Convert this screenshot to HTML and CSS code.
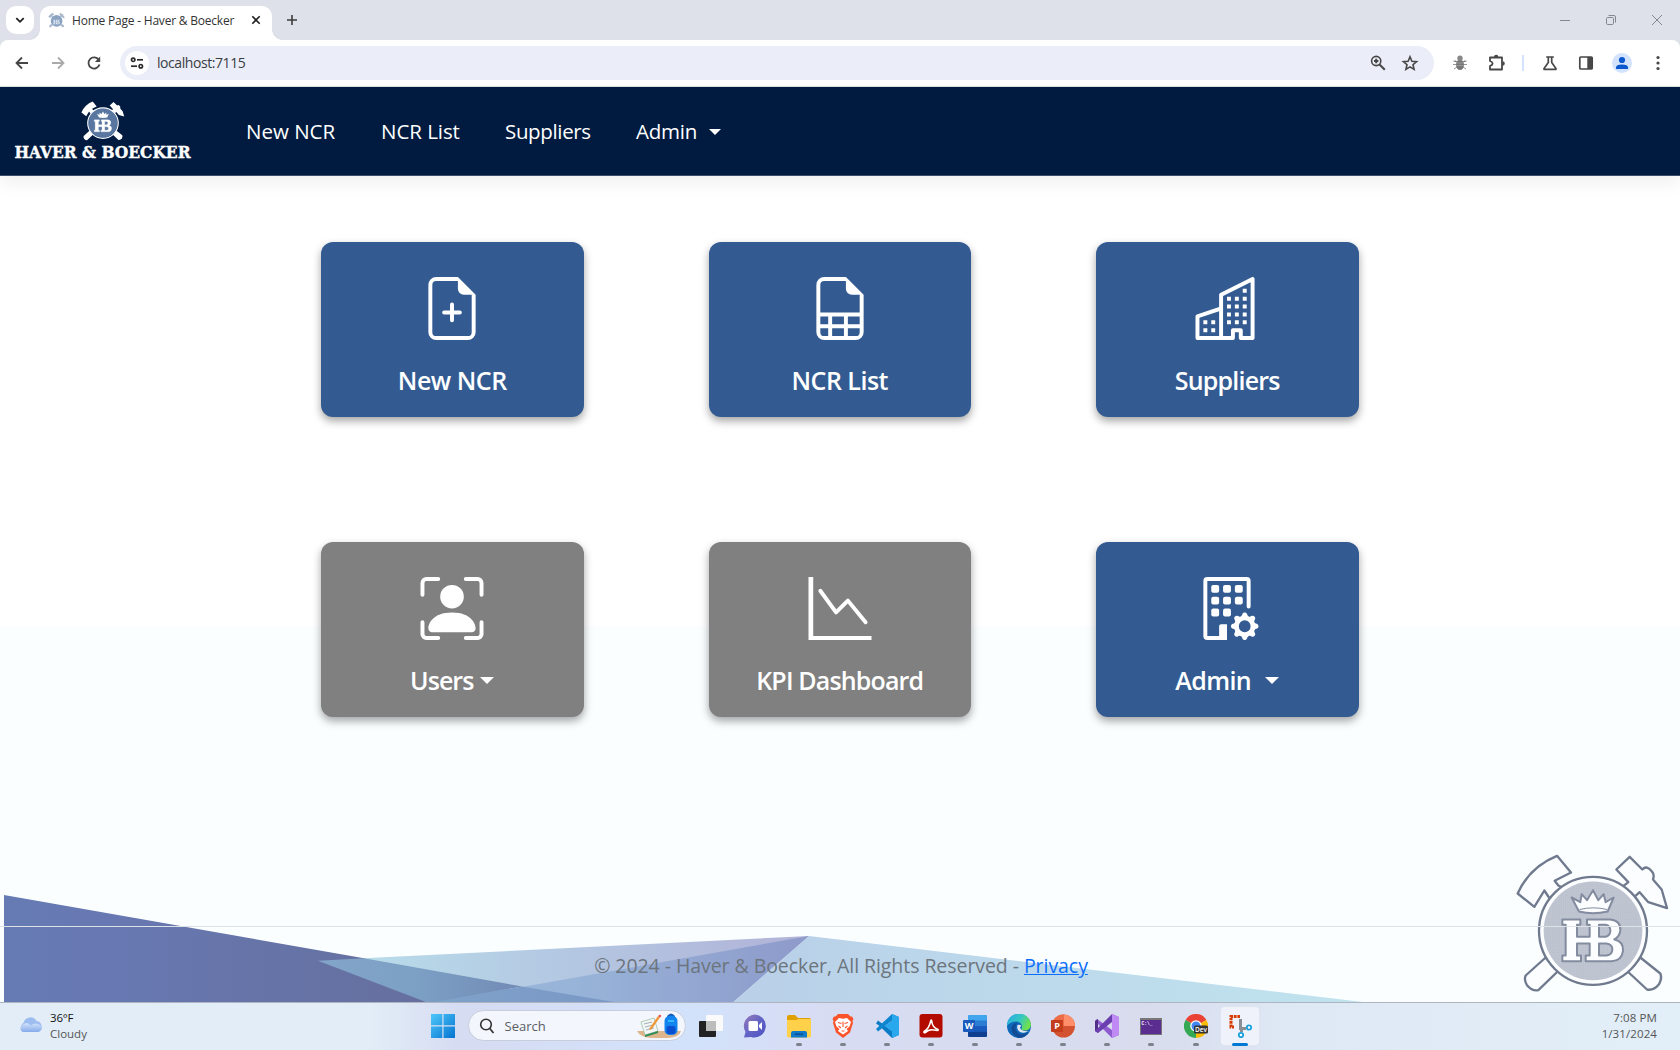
FILE: index.html
```html
<!DOCTYPE html>
<html lang="en">
<head>
<meta charset="utf-8">
<title>Home Page - Haver &amp; Boecker</title>
<link rel="stylesheet" href="styles.css">
</head>
<body>
<svg class="defs" width="0" height="0" aria-hidden="true">
  <defs>
    <pattern id="mesh" width="11" height="11" patternUnits="userSpaceOnUse"><path d="M0 3H11M3 0V11M0 8.500H11M8.500 0V11" stroke="#8089a0" stroke-width="1.600" opacity=".7"/></pattern>
    <pattern id="meshw" width="32" height="32" patternUnits="userSpaceOnUse"><path d="M0 8H32M8 0V32M0 24H32M24 0V32" stroke="#a9c0dd" stroke-width="7" opacity=".5"/></pattern>
    <g id="hammers">
      <path d="M232 77L274 127L225 152L236 166L248 172L210 205L194 181L164 230L114 190Q150 110 232 77Z"/>
      <path d="M450 80L488 118Q500 104 515 122Q526 132 520 148L546 178L562 234L506 216L480 186L464 200L428 170L446 156L410 118Z"/>
      <path d="M198 382L138 436Q132 450 142 465Q158 484 176 480L234 424Z"/>
      <path d="M482 382L542 430Q548 444 538 462Q522 482 502 478L444 424Z"/>
    </g>
    <path id="crown" d="M276 202L302 216L306 192L322 210L340 180L356 210L372 192L378 216L402 202L384 244Q340 254 298 244Z"/>
    <path id="hb" d="M248 268H302V284H292V320H330V284H322V268H392Q424 272 422 300Q420 320 404 328Q432 334 430 362Q426 392 396 393H318V376H330V340H292V376H304V393H248V376H258V284H248ZM358 284V320H378Q392 316 392 302Q392 286 378 284ZM358 340V376H380Q398 374 398 358Q398 342 380 340Z" fill-rule="evenodd"/>
  </defs>
</svg>

<header class="browser">
  <div class="tabstrip">
    <button class="tabsearch"><svg viewBox="0 0 12 12" width="12" height="12"><path d="M2.300 4.200L6 7.800L9.700 4.200" fill="none" stroke="#1f1f1f" stroke-width="1.800"/></svg></button>
    <div class="tab">
      <svg class="fav" viewBox="105 65 465 425" width="17" height="16"><g fill="#a9b8cc"><use href="#hammers"/></g><circle cx="340" cy="302" r="160" fill="#8ba3c2"/><use href="#hb" fill="#dfe7f1"/></svg>
      <span class="tabtitle">Home Page - Haver &amp; Boecker</span>
      <svg class="tabclose" viewBox="0 0 10 10" width="10" height="10"><path d="M1.300 1.300L8.700 8.700M8.700 1.300L1.300 8.700" stroke="#1f1f1f" stroke-width="1.600"/></svg>
    </div>
    <svg class="newtab" viewBox="0 0 12 12" width="12" height="12"><path d="M6 1V11M1 6H11" stroke="#3c3c3c" stroke-width="1.600"/></svg>
    <div class="winbtns">
      <svg viewBox="0 0 12 12"><path d="M1 6.500H11" stroke="#85888e"/></svg>
      <svg viewBox="0 0 12 12"><g fill="none" stroke="#85888e"><rect x="1.500" y="3.500" width="7" height="7" rx="1.200"/><path d="M3.500 1.500H9Q10.500 1.500 10.500 3V8.500"/></g></svg>
      <svg viewBox="0 0 12 12"><path d="M1 1L11 11M11 1L1 11" stroke="#85888e"/></svg>
    </div>
  </div>
  <div class="toolbar">
    <svg class="slot" viewBox="0 0 36 36"><path d="M24 18H13M18 12.500L12.500 18L18 23.500" fill="none" stroke="#474747" stroke-width="1.800"/></svg>
    <svg class="slot" viewBox="0 0 36 36"><path d="M12 18H23M18 12.500L23.500 18L18 23.500" fill="none" stroke="#aaa" stroke-width="1.800"/></svg>
    <svg class="slot" viewBox="0 0 36 36"><path d="M22.800 14.900A5.600 5.600 0 1 0 23.500 19.500" fill="none" stroke="#474747" stroke-width="1.800"/><path d="M24.200 11.600V16.900H18.900Z" fill="#474747"/></svg>
    <div class="omnibox">
      <span class="siteinfo"><svg viewBox="0 0 14 12" width="14" height="12"><g fill="none" stroke="#2b2b2b" stroke-width="1.700"><circle cx="3.200" cy="2.800" r="1.700"/><path d="M7 2.800H13"/><circle cx="10.800" cy="9.200" r="1.700"/><path d="M1 9.200H7"/></g></svg></span>
      <span class="url">localhost:7115</span>
      <svg class="in" viewBox="0 0 32 36"><g fill="none" stroke="#474747" stroke-width="1.600"><circle cx="14.200" cy="16" r="4.600"/><path d="M17.500 19.500L22.800 24.800" stroke-width="2"/></g><path d="M14.200 13.800V18.200M12 16H16.400" stroke="#474747" stroke-width="2"/></svg>
      <svg class="in" viewBox="0 0 32 36"><path d="M16 11.800L17.900 16.200L22.600 16.600L19 19.700L20.100 24.400L16 21.900L11.900 24.400L13 19.700L9.400 16.600L14.100 16.200Z" fill="none" stroke="#474747" stroke-width="1.600"/></svg>
    </div>
    <svg class="slot" viewBox="0 0 36 36"><g stroke="#999" stroke-width="1"><path d="M11.500 16H14L16 17.500M24.500 16H22L20 17.500M11 19.500H25M12 24L15 22M24 24L21 22"/></g><ellipse cx="18" cy="19.700" rx="4" ry="5.200" fill="#777"/><path d="M14.500 18H21.500M14.300 20.500H21.700" stroke="#999"/><circle cx="18" cy="13.200" r="2.700" fill="#888"/></svg>
    <svg class="slot" viewBox="0 0 36 36"><path d="M12 12.500H24V24.500H12V21Q14.600 20 14.600 18.500Q14.600 17 12 16Z" fill="none" stroke="#474747" stroke-width="1.800" stroke-linejoin="round"/><path d="M16 12A2.200 2.200 0 0 1 20.400 12ZM24.500 16.200A2.200 2.200 0 0 1 24.500 20.800Z" fill="#474747"/></svg>
    <span class="vbar"></span>
    <svg class="slot" viewBox="0 0 36 36"><path d="M14.200 12H21.800M16.300 12V17.500L12 23.600Q11.800 24.400 12.600 24.400H23.400Q24.200 24.400 24 23.600L19.700 17.500V12" fill="none" stroke="#474747" stroke-width="1.700"/></svg>
    <svg class="slot" viewBox="0 0 36 36"><rect x="11.800" y="12" width="12.400" height="12" rx="1" fill="none" stroke="#474747" stroke-width="1.700"/><rect x="19.300" y="12" width="5" height="12" fill="#474747"/></svg>
    <svg class="slot" viewBox="0 0 36 36"><circle cx="18" cy="18" r="10" fill="#d3e3fd"/><circle cx="18" cy="15" r="3.100" fill="#0b57d0"/><path d="M12 24V22.300Q12 19.400 18 19.400Q24 19.400 24 22.300V24Z" fill="#0b57d0"/></svg>
    <svg class="slot" viewBox="0 0 36 36"><g fill="#474747"><circle cx="18" cy="12.500" r="1.600"/><circle cx="18" cy="18" r="1.600"/><circle cx="18" cy="23.500" r="1.600"/></g></svg>
  </div>
</header>

<div class="page">
  <svg class="shards" viewBox="0 884 1680 118" width="1680" height="118" aria-hidden="true">
    <defs>
      <linearGradient id="g1" gradientUnits="userSpaceOnUse" x1="4" y1="0" x2="420" y2="0"><stop offset="0" stop-color="#667bb3"/><stop offset=".25" stop-color="#6878b2"/><stop offset=".6" stop-color="#6674a8"/><stop offset="1" stop-color="#66709f"/></linearGradient>
      <linearGradient id="g2" gradientUnits="userSpaceOnUse" x1="364" y1="0" x2="800" y2="0"><stop offset="0" stop-color="#b8dcea"/><stop offset=".4" stop-color="#b4cae3"/><stop offset="1" stop-color="#b1b3d8"/></linearGradient>
      <linearGradient id="g3" gradientUnits="userSpaceOnUse" x1="560" y1="0" x2="800" y2="0"><stop offset="0" stop-color="#98b5d9"/><stop offset="1" stop-color="#8e9bcb"/></linearGradient>
      <linearGradient id="g4" gradientUnits="userSpaceOnUse" x1="735" y1="0" x2="1363" y2="0"><stop offset="0" stop-color="#b9d0e8"/><stop offset="1" stop-color="#c0e3ee"/></linearGradient>
      <linearGradient id="g5" gradientUnits="userSpaceOnUse" x1="318" y1="0" x2="520" y2="0"><stop offset="0" stop-color="#82a5c9"/><stop offset=".5" stop-color="#7c9fc4"/><stop offset="1" stop-color="#738bb5"/></linearGradient>
      <linearGradient id="g6" gradientUnits="userSpaceOnUse" x1="440" y1="0" x2="616" y2="0"><stop offset="0" stop-color="#7fa2c9"/><stop offset="1" stop-color="#7a98c6"/></linearGradient>
    </defs>
    <path d="M318 960.500L809 936L733 1002H426Z" fill="url(#g2)"/>
    <path d="M439 1002L522 987L809 936L733.500 1002Z" fill="url(#g3)"/>
    <path d="M809 936L1363 1002H733.500Z" fill="url(#g4)"/>
    <path d="M4 895L364 958.200L426 1002H4Z" fill="url(#g1)"/>
    <path d="M318 960.700L364 958.200L522 986.500L439 1002H426Z" fill="url(#g5)"/>
    <path d="M522 986.500L614 1002H434Z" fill="url(#g6)"/>
  </svg>
  <svg class="emblem" viewBox="100 60 480 440" width="160" height="147" aria-hidden="true">
    <g fill="#fbfdff" stroke="#707a8e" stroke-width="7" stroke-linejoin="round"><use href="#hammers"/><circle cx="340" cy="302" r="162"/></g>
    <circle cx="340" cy="302" r="148" fill="#dfe1e9"/><circle cx="340" cy="302" r="148" fill="url(#mesh)"/>
    <g fill="#fbfdff" stroke="#838b9f" stroke-width="6" stroke-linejoin="round"><use href="#crown"/><use href="#hb"/></g>
    <path d="M300 238Q340 228 382 238" fill="none" stroke="#838b9f" stroke-width="3"/>
  </svg>

  <nav class="navbar">
    <a class="brand">
      <svg viewBox="10 98 187 72" width="187" height="72">
        <svg x="80" y="103" width="46" height="42" viewBox="100 60 480 440">
          <g fill="#fff"><use href="#hammers"/></g>
          <circle cx="340" cy="302" r="160" fill="#2d4f80" stroke="#fff" stroke-width="12"/><circle cx="340" cy="302" r="152" fill="url(#meshw)"/>
          <use href="#crown" fill="#fff"/><use href="#hb" fill="#fff" stroke="#fff" stroke-width="3"/>
        </svg>
        <text x="14.500" y="160.500" textLength="176" lengthAdjust="spacingAndGlyphs" class="brandtext">HAVER &amp; BOECKER</text>
      </svg>
    </a>
    <a class="l1">New NCR</a>
    <a class="l2">NCR List</a>
    <a class="l3">Suppliers</a>
    <a class="l4">Admin<i class="caret"></i></a>
  </nav>

  <main class="cards">
    <a class="card">
      <svg viewBox="0 0 16 16"><path d="M8 6.500a.5.5 0 0 1 .5.5v1.500H10a.5.5 0 0 1 0 1H8.500V11a.5.5 0 0 1-1 0V9.500H6a.5.5 0 0 1 0-1h1.500V7a.5.5 0 0 1 .5-.5"/><path d="M14 4.500V14a2 2 0 0 1-2 2H4a2 2 0 0 1-2-2V2a2 2 0 0 1 2-2h5.500zm-3 0A1.500 1.500 0 0 1 9.500 3V1H4a1 1 0 0 0-1 1v12a1 1 0 0 0 1 1h8a1 1 0 0 0 1-1V4.500z"/></svg>
      <span class="t1">New NCR</span>
    </a>
    <a class="card">
      <svg viewBox="0 0 16 16"><path d="M14 14V4.500L9.500 0H4a2 2 0 0 0-2 2v12a2 2 0 0 0 2 2h8a2 2 0 0 0 2-2M9.500 3A1.500 1.500 0 0 0 11 4.500h2V9H3V2a1 1 0 0 1 1-1h5.500zM3 12v-2h2v2zm0 1h2v2H4a1 1 0 0 1-1-1zm3 2v-2h3v2zm4 0v-2h3v1a1 1 0 0 1-1 1zm3-3h-3v-2h3zm-7 0v-2h3v2z"/></svg>
      <span class="t2">NCR List</span>
    </a>
    <a class="card">
      <svg viewBox="0 0 16 16"><path d="M14.763.075A.5.5 0 0 1 15 .5v15a.5.5 0 0 1-.5.5h-3a.5.5 0 0 1-.5-.5V14h-1v1.500a.5.5 0 0 1-.5.5h-9a.5.5 0 0 1-.5-.5V10a.5.5 0 0 1 .342-.474L6 7.640V4.500a.5.5 0 0 1 .276-.447l8-4a.5.5 0 0 1 .487.022M6 8.694 1 10.360V15h5zM7 15h2v-1.500a.5.5 0 0 1 .5-.5h2a.5.5 0 0 1 .5.5V15h2V1.309l-7 3.500z"/><path d="M2 11h1v1H2zm2 0h1v1H4zm-2 2h1v1H2zm2 0h1v1H4zm4-4h1v1H8zm2 0h1v1h-1zm-2 2h1v1H8zm2 0h1v1h-1zm2-2h1v1h-1zm0 2h1v1h-1zM8 7h1v1H8zm2 0h1v1h-1zm2 0h1v1h-1zM8 5h1v1H8zm2 0h1v1h-1zm2 0h1v1h-1zm0-2h1v1h-1z"/></svg>
      <span class="t3">Suppliers</span>
    </a>
    <a class="card off">
      <svg viewBox="0 0 16 16"><path d="M1.500 1a.5.5 0 0 0-.5.5v3a.5.5 0 0 1-1 0v-3A1.500 1.500 0 0 1 1.500 0h3a.5.5 0 0 1 0 1zM11 .5a.5.5 0 0 1 .5-.5h3A1.500 1.500 0 0 1 16 1.500v3a.5.5 0 0 1-1 0v-3a.5.5 0 0 0-.5-.5h-3a.5.5 0 0 1-.5-.5M.5 11a.5.5 0 0 1 .5.5v3a.5.5 0 0 0 .5.5h3a.5.5 0 0 1 0 1h-3A1.500 1.500 0 0 1 0 14.500v-3a.5.5 0 0 1 .5-.5m15 0a.5.5 0 0 1 .5.5v3a1.500 1.500 0 0 1-1.500 1.500h-3a.5.5 0 0 1 0-1h3a.5.5 0 0 0 .5-.5v-3a.5.5 0 0 1 .5-.5"/><path d="M3 14s-1 0-1-1 1-4 6-4 6 3 6 4-1 1-1 1zm8-9a3 3 0 1 1-6 0 3 3 0 0 1 6 0"/></svg>
      <span class="t4">Users<i class="caret"></i></span>
    </a>
    <a class="card off">
      <svg viewBox="0 0 16 16"><path d="M0 0h1.200v15H16v1H0z"/><path d="M3 3.500L7 9L10 6L14.500 11.500" fill="none" stroke="#fff" stroke-linecap="round" stroke-linejoin="round"/></svg>
      <span class="t5">KPI Dashboard</span>
    </a>
    <a class="card">
      <svg viewBox="0 0 16 16"><path d="M2 1a1 1 0 0 1 1-1h10a1 1 0 0 1 1 1v6.500a.5.5 0 0 1-1 0V1H3v14h3v-2.500a.5.5 0 0 1 .5-.5H8v4H3a1 1 0 0 1-1-1z"/><g><rect x="4" y="2" width="2" height="2" rx=".5"/><rect x="7" y="2" width="2" height="2" rx=".5"/><rect x="10" y="2" width="2" height="2" rx=".5"/><rect x="4" y="5" width="2" height="2" rx=".5"/><rect x="7" y="5" width="2" height="2" rx=".5"/><rect x="10" y="5" width="2" height="2" rx=".5"/><rect x="4" y="8" width="2" height="2" rx=".5"/><rect x="7" y="8" width="2" height="2" rx=".5"/></g><path d="M11.886 9.460c.18-.613 1.048-.613 1.229 0l.043.148a.64.64 0 0 0 .921.382l.136-.074c.561-.306 1.175.308.87.869l-.075.136a.64.64 0 0 0 .382.92l.149.045c.612.18.612 1.048 0 1.229l-.15.043a.64.64 0 0 0-.38.921l.074.136c.305.561-.309 1.175-.87.87l-.136-.075a.64.64 0 0 0-.92.382l-.045.149c-.18.612-1.048.612-1.229 0l-.043-.15a.64.64 0 0 0-.921-.38l-.136.074c-.561.305-1.175-.309-.87-.87l.075-.136a.64.64 0 0 0-.382-.92l-.148-.045c-.613-.18-.613-1.048 0-1.229l.148-.043a.64.64 0 0 0 .382-.921l-.074-.136c-.306-.561.308-1.175.869-.87l.136.075a.64.64 0 0 0 .92-.382zM14 12.500a1.500 1.500 0 1 0-3 0 1.500 1.500 0 0 0 3 0"/></svg>
      <span class="t6">Admin<i class="caret wide"></i></span>
    </a>
  </main>

  <footer class="footer"><span>© 2024 - Haver &amp; Boecker, All Rights Reserved - <a href="#">Privacy</a></span></footer>
</div>

<div class="taskbar">
  <div class="weather">
    <svg viewBox="0 0 26 22" width="26" height="22"><defs><linearGradient id="cl" x1="0" y1="0" x2="0" y2="1"><stop offset="0" stop-color="#d3e3fb"/><stop offset="1" stop-color="#86abea"/></linearGradient></defs><path d="M6 17A5 5 0 0 1 5.500 8A7 7 0 0 1 18.500 6A5.700 5.700 0 0 1 20 17Z" fill="#9dbdf0"/><path d="M5 17A4 4 0 0 1 5 9.500Q9 6 13 10.500Q16 7.500 20 9Q25 11 23.500 14.500Q22 17 19 17Z" fill="url(#cl)"/></svg>
    <div><div class="temp">36°F</div><div class="cond">Cloudy</div></div>
  </div>
  <div class="dock">
    <span class="app start"><svg viewBox="0 0 24 24"><defs><linearGradient id="w" x1="0" y1="0" x2="1" y2="1"><stop offset="0" stop-color="#4cc8fb"/><stop offset="1" stop-color="#0673cf"/></linearGradient></defs><path d="M0 0H11.300V11.300H0ZM12.500 0H24V11.300H12.500ZM0 12.500H11.300V24H0ZM12.500 12.500H24V24H12.500Z" fill="url(#w)"/></svg></span>
    <div class="search">
      <svg viewBox="0 0 16 16" width="16" height="16"><circle cx="7" cy="6.500" r="5.300" fill="none" stroke="#333" stroke-width="1.600"/><path d="M10.800 10.500L14.500 15" stroke="#333" stroke-width="1.800"/></svg>
      <span>Search</span>
      <svg class="art" viewBox="0 0 44 26" width="44" height="26"><path d="M0 18H44Q42 25 30 25H14Q3 24 0 18Z" fill="#dfb58c"/><path d="M4 9L17 5L21 18L8 22Z" fill="#f4f7f4" stroke="#8fb8a0" stroke-width=".7"/><path d="M8 22L21 18V20L8 24Z" fill="#2f8b57"/><path d="M7 11L15 9M8 14L16 12M9 17L17 15" stroke="#a0aec0" stroke-width="1"/><path d="M12 16L21 3L23 4.500L14 17Z" fill="#ee9a3a"/><path d="M21 3L23 1.500L24.500 3L23 4.500Z" fill="#e05252"/><path d="M30 3Q34 -2 38 3V6H30Z" fill="#1560bd"/><rect x="27.500" y="3" width="13" height="19" rx="5" fill="#1284f0"/><rect x="29.500" y="13" width="9" height="8" rx="2" fill="#0a4fd0"/><rect x="31" y="7" width="6" height="2" fill="#35b8ff"/></svg>
    </div>
    <span class="app"><svg viewBox="0 0 24 24"><rect x="0" y="7" width="17" height="16" rx="1" fill="#222"/><rect x="7" y="1" width="17" height="16" rx="1" fill="#fafafa"/><rect x="7" y="7" width="10" height="10" fill="#bdbdbd"/></svg></span>
    <span class="app"><svg viewBox="0 0 24 24"><defs><linearGradient id="ch" x1="0" y1="0" x2="1" y2="1"><stop offset="0" stop-color="#9a7bb4"/><stop offset=".5" stop-color="#6264c7"/><stop offset="1" stop-color="#4f52c0"/></linearGradient></defs><path d="M12 0.500A11.500 11.500 0 1 1 8 23L1 23.500L2.500 18A11.500 11.500 0 0 1 12 .5Z" fill="url(#ch)"/><rect x="5.500" y="7" width="9.500" height="10" rx="1.500" fill="#fff"/><path d="M16 11L19 8V16L16 13Z" fill="#fff"/></svg></span>
    <span class="app on"><svg viewBox="0 0 24 24"><path d="M0 3Q0 1 2 1H8L11 4H22Q24 4 24 6V10H0Z" fill="#dfa000"/><path d="M0 6H9L11 5H23Q24 5 24 6.500V22Q24 23.500 22 23.500H2Q0 23.500 0 22Z" fill="#ffd04a"/><path d="M4 23.500V19Q4 17 6 17H18Q20 17 20 19V23.500Z" fill="#1177c8"/><rect x="8" y="19.500" width="8" height="1.500" fill="#0b4f91"/></svg></span>
    <span class="app on"><svg viewBox="0 0 24 24"><path d="M7 0H17L19.500 2.500L21 2.500L22.500 5L21.500 7L22 9L19 18.500L12 24L5 18.500L2 9L2.500 7L1.500 5L3 2.500L4.500 2.500Z" fill="#fb542b"/><path d="M8 4L12 4.800L16 4L20 8L18.500 12.500L15.500 15L17 17L12 20.500L7 17L8.500 15L5.500 12.500L4 8Z" fill="#fff"/><path d="M12 7.500V13M7 8.500L10.500 9.500M17 8.500L13.500 9.500M7.500 12L10 14M16.500 12L14 14M10.500 17H13.500" stroke="#fb542b" stroke-width="1.100"/></svg></span>
    <span class="app on"><svg viewBox="0 0 24 24"><path d="M17 0L24 3V21L17 24L4 11.500L1 9.500L3 6.500L17 17Z" fill="#0a7bc4"/><path d="M17 0L24 3V21L17 24V17.500L10 12L17 6.500Z" fill="#2aa8ee"/><path d="M3 17.500L1 15L17 0V6.500Z" fill="#0e86cf"/></svg></span>
    <span class="app on"><svg viewBox="0 0 24 24"><rect x=".5" y="0" width="23" height="23.500" rx="3" fill="#b30b00"/><path d="M5 17.500Q10 15 11.700 7Q12 5 12.800 7Q13 13 19 15.500Q20 16.800 17 16.300Q10 14.500 6.500 18.500Q4.500 19.500 5 17.500Z" fill="none" stroke="#fff" stroke-width="1.500"/></svg></span>
    <span class="app on"><svg viewBox="0 0 24 24"><rect x="5" y="1" width="19" height="22" rx="1.500" fill="#2b7cd3"/><path d="M5 2.500Q5 1 6.500 1H22.500Q24 1 24 2.500V6.500H5Z" fill="#41a5ee"/><rect x="5" y="12" width="19" height="5.500" fill="#185abd"/><path d="M5 17.500H24V21.500Q24 23 22.500 23H6.500Q5 23 5 21.500Z" fill="#103f91"/><rect x="0" y="6" width="12" height="12" rx="1" fill="#185abd"/><text x="6" y="15.200" class="ltr">W</text></svg></span>
    <span class="app on"><svg viewBox="0 0 24 24"><defs><linearGradient id="e1" x1="0" y1="0" x2="1" y2=".4"><stop offset="0" stop-color="#27a9e8"/><stop offset=".6" stop-color="#35c7c0"/><stop offset="1" stop-color="#70e04f"/></linearGradient></defs><circle cx="12" cy="12" r="12" fill="#0f67b8"/><path d="M0 12A12 12 0 0 1 24 11Q23.500 16.500 17 16.500Q13 16 15 13Q15 8 9.500 7.500Q3 7.500 0 12Z" fill="url(#e1)"/><path d="M10 9Q6 14 11 19Q15 22 21.500 18Q19 23 13 24Q4 22 4.500 14Q5.500 9.500 10 9Z" fill="#124b95"/><path d="M10.500 11Q9 15 13 18Q17 20 22 17Q17 18 14 15.500Q12 13 14.500 12Q13 10 10.500 11Z" fill="#e2e6f4"/></svg></span>
    <span class="app on"><svg viewBox="0 0 24 24"><circle cx="12.500" cy="12" r="11.500" fill="#d35230"/><path d="M12.500 .5A11.500 11.500 0 0 1 24 12H12.500Z" fill="#ff8f6b"/><path d="M12.500 .5A11.500 11.500 0 0 0 1 12H12.500Z" fill="#ed6c47"/><rect x="0" y="6" width="12" height="12" rx="1" fill="#c43e1c"/><text x="6" y="15.200" class="ltr">P</text></svg></span>
    <span class="app on"><svg viewBox="0 0 24 24"><path d="M17 0L24 3V21L17 24L0 7L2 5L17 16Z" fill="#8f5bd0"/><path d="M17 0L24 3V21L17 24Z" fill="#c08af4"/><path d="M0 7L3 5V19L0 17Z" fill="#52308a"/><path d="M3 19L0 17L17 0V8Z" fill="#6c3fb0"/></svg></span>
    <span class="app on"><svg viewBox="0 0 24 24"><rect x="1" y="4" width="22" height="17" fill="#777"/><rect x="2" y="6" width="20" height="14" fill="#5c2d91"/><text x="8" y="11" class="tty">C:\_</text></svg></span>
    <span class="app on"><svg viewBox="0 0 24 24"><path d="M12 12L1.600 6A12 12 0 0 1 22.400 6Z" fill="#ea4335"/><path d="M12 12L22.400 6A12 12 0 0 1 12 24Z" fill="#fbbc04"/><path d="M12 12V24A12 12 0 0 1 1.600 6Z" fill="#34a853"/><circle cx="12" cy="12" r="5.800" fill="#fff"/><circle cx="12" cy="12" r="4.500" fill="#4285f4"/><rect x="10" y="11.500" width="14" height="8" rx="1.500" fill="#333"/><text x="17" y="18" class="dev">Dev</text></svg></span>
    <span class="app on active"><svg viewBox="0 0 24 24"><path d="M12 2.500H3V13H6" fill="none" stroke="#d83b01" stroke-width="3" stroke-dasharray="2.600 .8"/><path d="M12.500 5V14.500H18M13.500 14V18" fill="none" stroke="#8a8f96" stroke-width="3"/><g fill="#fff" stroke="#189fdc" stroke-width="1.800"><circle cx="21" cy="13.500" r="2.200"/><circle cx="13" cy="21" r="2.200"/></g></svg></span>
  </div>
  <div class="clock"><div>7:08 PM</div><div>1/31/2024</div></div>
</div>
</body>
</html>
```
FILE: styles.css
```css
* { box-sizing: border-box; }
body {
  margin: 0;
  width: 1680px;
  height: 1050px;
  overflow: hidden;
  display: flex;
  flex-direction: column;
  font-family: "Open Sans", "Noto Sans", sans-serif;
  background: #fff;
}
svg { display: block; flex: none; }
.defs { position: absolute; }

/* browser chrome */
.browser { height: 87px; flex: none; background: #dee1e9; }
.tabstrip { height: 40px; display: flex; padding: 6px 0 0 6px; }
.tabsearch { width: 28px; height: 28px; border: 0; border-radius: 10px; background: #fff; padding: 0; display: grid; place-items: center; }
.tab {
  position: relative;
  width: 232px; height: 34px; margin-left: 6px;
  border-radius: 10px 10px 0 0;
  background: #fff;
  display: flex; align-items: center;
  padding: 0 11px 6px 8px;
}
.tab::before, .tab::after {
  content: ""; position: absolute; bottom: 0; width: 10px; height: 10px;
}
.tab::before { left: -10px; background: radial-gradient(circle at 0 0, transparent 9.5px, #fff 10px); }
.tab::after { right: -10px; background: radial-gradient(circle at 100% 0, transparent 9.5px, #fff 10px); }
.tabtitle { margin-left: 7px; font-size: 12px; letter-spacing: -0.21px; color: #333; white-space: nowrap; flex: 1; }
.newtab { margin: 8px 0 0 14px; }
.winbtns { margin-left: auto; display: flex; gap: 34px; padding: 8px 17px 0 0; }
.winbtns svg { width: 12px; height: 12px; }
.toolbar {
  height: 47px;
  background: #fff;
  border-bottom: 1px solid #dcdfdc;
  border-radius: 8px 8px 0 0;
  display: flex; align-items: center;
  padding: 0 4px;
}
.slot { width: 36px; height: 36px; }
.omnibox {
  flex: 1; height: 34px; margin: 0 8px; border-radius: 17px;
  background: #ebeef8;
  display: flex; align-items: center;
  padding: 0 8px 0 5px;
}
.siteinfo { width: 24px; height: 24px; border-radius: 50%; background: #fff; display: grid; place-items: center; }
.url { flex: 1; margin-left: 8px; padding-bottom: 1px; font-size: 14px; letter-spacing: -0.43px; color: #3a3d43; }
.in { width: 32px; height: 36px; }
.vbar { width: 2px; height: 16px; margin: 0 8px; background: #d3e3fd; }

/* application page */
.page {
  position: relative;
  flex: 1;
  display: flex; flex-direction: column;
  background: linear-gradient(#fff 539px, #fbfeff 539px);
}
.shards { position: absolute; left: 0; bottom: 0; }
.emblem { position: absolute; left: 1513px; bottom: 5px; }
.navbar {
  position: relative;
  height: 89px; flex: none;
  background: #001b3f;
  border-bottom: 1px solid #3b4d68;
  box-shadow: 0 8px 16px rgba(0,0,0,.06);
  display: flex; align-items: center;
  padding-left: 10px;
  color: #fff;
  font-size: 20.5px;
  white-space: nowrap;
}
.brandtext { font: bold 16.5px "DejaVu Serif", serif; fill: #fff; stroke: #fff; stroke-width: .4px; }
.l1 { margin-left: 49px; width: 135px; letter-spacing: 0; }
.l2 { width: 124px; letter-spacing: -0.05px; }
.l3 { width: 131px; letter-spacing: -0.35px; }
.l4 { letter-spacing: -0.25px; }
.caret { display: inline-block; border: 6px solid transparent; border-top-color: #fff; border-bottom: 0; margin-left: 12px; vertical-align: 4px; }
.cards {
  position: relative;
  flex: 1;
  display: grid;
  grid-template-columns: repeat(3, 262.5px);
  grid-auto-rows: 175px;
  gap: 125px;
  padding: 66px 0 0 321px;
}
.card {
  border-radius: 12px;
  background: #335b92;
  color: #fff;
  box-shadow: 0 4px 8px rgba(0,0,0,.36);
  display: flex; flex-direction: column; align-items: center;
  padding-top: 35px;
  font-size: 25px; font-weight: 600; line-height: 34px;
  letter-spacing: -0.6px;
  white-space: nowrap;
}
.card.off { background: #808080; }
.card svg { width: 64px; height: 63px; fill: #fff; margin-bottom: 23px; }
.card .t1, .card .t2 { letter-spacing: -0.5px; }
.card .t3 { letter-spacing: -0.8px; }
.card .t4 { letter-spacing: -0.95px; }
.card .t5 { letter-spacing: -0.85px; }
.card .caret { border-width: 7px 7px 0; margin-left: 7px; vertical-align: 6.5px; }
.card .caret.wide { margin-left: 14px; }
.footer {
  position: relative;
  height: 76px; flex: none;
  border-top: 1px solid #dee2e6;
  display: flex; justify-content: center; align-items: center;
  color: #6c757d;
  font-size: 19.5px; letter-spacing: -0.06px;
  padding: 2px 0 0 2px;
}
.footer a { color: #0d6efd; }

/* desktop taskbar */
.taskbar {
  height: 48px; flex: none;
  display: flex; align-items: center;
  border-top: 1px solid #aeb4c0;
  padding-bottom: 2px;
  background: linear-gradient(90deg, #e2edf7 0, #e2edf7 370px, #d6dcf2 460px, #d2e2fb 690px, #d8dcf3 830px, #d8dced 1150px, #dfe9f5 1300px, #e2eef8 1680px);
}
.weather { width: 420.5px; padding-left: 18px; display: flex; align-items: center; gap: 6px; font-size: 11.5px; line-height: 16px; color: #111; }
.cond { color: #555; }
.temp { letter-spacing: -0.2px; }
.dock { display: flex; align-items: center; }
.app { position: relative; width: 38px; height: 38px; margin-right: 6.1px; display: grid; place-items: center; border-radius: 4px; }
.app svg { width: 24px; height: 24px; }
.app.start { width: 44px; margin-right: 3px; }
.app.on::after { content: ""; position: absolute; bottom: -1px; left: 16px; width: 6px; height: 3px; border-radius: 2px; background: #7d818c; }
.app.active { background: #eff2fa; box-shadow: 0 0 0 1px #dfe4f0; }
.app.active::after { left: 11px; width: 16px; background: #0078d4; }
.search {
  width: 218px; height: 31px; margin-right: 6px;
  border-radius: 16px; background: #f3f6fd; border: 1px solid #c8cede;
  display: flex; align-items: center; gap: 10px; padding: 0 4px 0 10px;
  font-size: 13px; color: #5a5d63;
}
.search span { flex: 1; }
.ltr { font: bold 9px "Open Sans", sans-serif; fill: #fff; text-anchor: middle; }
.tty { font: bold 4.5px "Liberation Mono", monospace; fill: #fff; text-anchor: middle; }
.dev { font: 600 6.5px "Open Sans", sans-serif; fill: #fff; text-anchor: middle; }
.clock { margin-left: auto; padding-right: 23px; text-align: right; font-size: 11.5px; line-height: 16px; letter-spacing: 0.1px; color: #555; }
```
